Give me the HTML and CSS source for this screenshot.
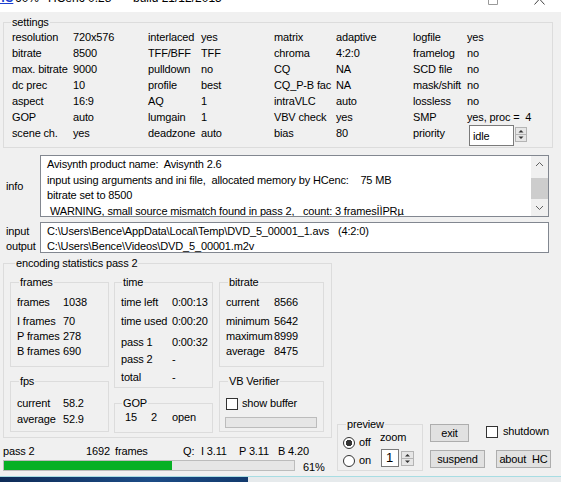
FILE: index.html
```html
<!DOCTYPE html>
<html lang="en">
<head>
  <meta charset="UTF-8">
  <title>HCenc 0.28</title>
  <link rel="stylesheet" href="styles.css">
</head>
<body>
  <div class="window">
    <div class="titlebar">
      <div class="title-text">
        <span class="app-icon">HC</span>
        <span class="t-pct">60%</span>
        <span class="t-name">HCenc 0.28</span>
        <span>build 21/12/2015</span>
      </div>
      <div class="title-controls">
        <svg width="10" height="5" viewBox="0 0 10 5"><path d="M0.5 0 V4.5 H9.5 V0" fill="none" stroke="#9a9a9a"/></svg>
        <svg width="11" height="5" viewBox="0 0 11 5"><path d="M5.5 -1 L0.5 4.5 M5.5 -1 L10.5 4.5" fill="none" stroke="#444"/></svg>
      </div>
    </div>

    <div class="content">
      <fieldset class="group settings">
        <legend>settings</legend>
        <div class="settings-grid">
          <span>resolution</span><span>720x576</span><span>interlaced</span><span>yes</span><span>matrix</span><span>adaptive</span><span>logfile</span><span>yes</span>
          <span>bitrate</span><span>8500</span><span>TFF/BFF</span><span>TFF</span><span>chroma</span><span>4:2:0</span><span>framelog</span><span>no</span>
          <span>max. bitrate</span><span>9000</span><span>pulldown</span><span>no</span><span>CQ</span><span>NA</span><span>SCD file</span><span>no</span>
          <span>dc prec</span><span>10</span><span>profile</span><span>best</span><span>CQ_P-B fac</span><span>NA</span><span>mask/shift</span><span>no</span>
          <span>aspect</span><span>16:9</span><span>AQ</span><span>1</span><span>intraVLC</span><span>auto</span><span>lossless</span><span>no</span>
          <span>GOP</span><span>auto</span><span>lumgain</span><span>1</span><span>VBV check</span><span>yes</span><span>SMP</span><span>yes, proc =  4</span>
          <span>scene ch.</span><span>yes</span><span>deadzone</span><span>auto</span><span>bias</span><span>80</span><span>priority</span>
          <span class="combo">
            <span class="combo-box">idle</span>
            <svg class="combo-spin" width="12" height="15" viewBox="0 0 12 15">
              <rect x="0.5" y="0.5" width="11" height="14" fill="#e6e6e6" stroke="#b4b4b4"/>
              <line x1="1" y1="7.5" x2="11" y2="7.5" stroke="#b4b4b4"/>
              <path d="M6 3 L8.5 5.5 H3.5 Z" fill="#333"/>
              <path d="M6 12 L8.5 9.5 H3.5 Z" fill="#333"/>
            </svg>
          </span>
        </div>
      </fieldset>

      <div class="info-row">
        <div class="side-label">info</div>
        <div class="edit info-box">
          <div class="info-text">Avisynth product name:  Avisynth 2.6
input using arguments and ini file,  allocated memory by HCenc:    75 MB
bitrate set to 8500
 WARNING, small source mismatch found in pass 2,   count: 3 framesİÌPRµ</div>
          <div class="scrollbar">
            <svg width="17" height="17" viewBox="0 0 17 17"><path d="M5 10 L8.5 6.5 L12 10" fill="none" stroke="#606060"/></svg>
            <div class="thumb"></div>
            <div class="track"></div>
            <svg width="17" height="17" viewBox="0 0 17 17"><path d="M5 7 L8.5 10.5 L12 7" fill="none" stroke="#606060"/></svg>
          </div>
        </div>
      </div>

      <div class="io-row">
        <div class="side-label io-labels">input
output</div>
        <div class="edit io-box">C:\Users\Bence\AppData\Local\Temp\DVD_5_00001_1.avs   (4:2:0)
C:\Users\Bence\Videos\DVD_5_00001.m2v</div>
      </div>

      <div class="lower">
        <div class="lower-left">
          <fieldset class="group stats">
            <legend>encoding statistics pass 2</legend>
            <div class="stat-cols">
              <div class="stat-col c1">
                <fieldset class="group box frames">
                  <legend>frames</legend>
                  <div class="kv"><span class="k">frames</span><span>1038</span></div>
                  <div class="kv mt4"><span class="k">I frames</span><span>70</span></div>
                  <div class="kv"><span class="k">P frames</span><span>278</span></div>
                  <div class="kv"><span class="k">B frames</span><span>690</span></div>
                </fieldset>
                <fieldset class="group box fps">
                  <legend>fps</legend>
                  <div class="kv"><span class="k">current</span><span>58.2</span></div>
                  <div class="kv mt1"><span class="k">average</span><span>52.9</span></div>
                </fieldset>
              </div>
              <div class="stat-col c2">
                <fieldset class="group box time">
                  <legend>time</legend>
                  <div class="kv"><span class="k">time left</span><span>0:00:13</span></div>
                  <div class="kv mt4"><span class="k">time used</span><span>0:00:20</span></div>
                  <div class="kv mt6"><span class="k">pass 1</span><span>0:00:32</span></div>
                  <div class="kv mt2"><span class="k">pass 2</span><span>-</span></div>
                  <div class="kv mt3"><span class="k">total</span><span>-</span></div>
                </fieldset>
                <fieldset class="group box gop">
                  <legend>GOP</legend>
                  <div class="gop-row"><span class="g1">15</span><span class="g2">2</span><span>open</span></div>
                </fieldset>
              </div>
              <div class="stat-col c3">
                <fieldset class="group box bitrate">
                  <legend>bitrate</legend>
                  <div class="kv"><span class="k">current</span><span>8566</span></div>
                  <div class="kv mt4"><span class="k">minimum</span><span>5642</span></div>
                  <div class="kv"><span class="k">maximum</span><span>8999</span></div>
                  <div class="kv"><span class="k">average</span><span>8475</span></div>
                </fieldset>
                <fieldset class="group box vbv">
                  <legend>VB Verifier</legend>
                  <div class="check-row"><span class="checkbox"></span><span>show buffer</span></div>
                  <div class="vb-bar"></div>
                </fieldset>
              </div>
            </div>
          </fieldset>

          <div class="pass-line">
            <span class="p-pass">pass 2</span>
            <span class="p-num">1692</span>
            <span class="p-frames">frames</span>
            <span class="p-q">Q:</span>
            <span class="p-i">I 3.11</span>
            <span class="p-p">P 3.11</span>
            <span>B 4.20</span>
          </div>
          <div class="progress-row">
            <div class="progress"><div class="fill" style="width: 58%"></div></div>
            <span class="pct">61%</span>
          </div>
        </div>

        <div class="lower-right">
          <fieldset class="group preview">
            <legend>preview</legend>
            <div class="preview-body">
              <div class="radios">
                <div class="radio-row"><span class="radio checked"></span><span>off</span></div>
                <div class="radio-row"><span class="radio"></span><span>on</span></div>
              </div>
              <div class="zoom">
                <div class="zoom-label">zoom</div>
                <div class="zoom-edit">
                  <span class="zoom-box">1</span>
                  <svg class="zoom-spin" width="13" height="15" viewBox="0 0 13 15">
                    <rect x="0.5" y="0.5" width="12" height="14" fill="#e6e6e6" stroke="#b4b4b4"/>
                    <line x1="1" y1="7.5" x2="12" y2="7.5" stroke="#b4b4b4"/>
                    <path d="M6.5 3 L9 5.5 H4 Z" fill="#333"/>
                    <path d="M6.5 12 L9 9.5 H4 Z" fill="#333"/>
                  </svg>
                </div>
              </div>
            </div>
          </fieldset>

          <div class="actions">
            <div class="action-row">
              <div class="btn btn-exit">exit</div>
              <span class="checkbox shut-box"></span>
              <span class="shut-label">shutdown</span>
            </div>
            <div class="action-row second">
              <div class="btn btn-wide">suspend</div>
              <div class="btn btn-wide about">about  HC</div>
            </div>
          </div>
        </div>
      </div>
    </div>
  </div>
  <div class="taskbar">
    <div class="desk"></div>
    <div class="tray"></div>
  </div>
</body>
</html>
```

FILE: styles.css
```css
* {
  box-sizing: border-box;
}
body {
  margin: 0;
  width: 561px;
  height: 482px;
  overflow: hidden;
  background: #f0f0f0;
  font-family: 'Liberation Sans', Arial, sans-serif;
  font-size: 11px;
  letter-spacing: -0.15px;
  color: #000;
}
.window {
  height: 476px;
  display: flex;
  flex-direction: column;
}

/* title bar (mostly scrolled off the top) */
.titlebar {
  height: 12px;
  flex: none;
  background: #fff;
  display: flex;
  overflow: hidden;
  font-size: 12px;
  letter-spacing: 0;
}
.title-text {
  display: flex;
  line-height: 12px;
  margin-top: -8px;
  white-space: nowrap;
}
.app-icon {
  width: 19px;
  margin-left: -4px;
  color: #1c3fd0;
  font-weight: bold;
  text-decoration: underline;
}
.t-pct {
  width: 33px;
}
.t-name {
  width: 85px;
}
.title-controls {
  margin-left: auto;
  display: flex;
  align-items: flex-start;
  gap: 36px;
  padding-right: 16px;
}

.content {
  flex: 1;
  overflow: hidden;
}

/* group boxes */
.group {
  border: 1px solid #dcdcdc;
  margin: 0;
  padding: 0;
  min-width: 0;
}
.group legend {
  padding: 0 1px;
  line-height: 13px;
}

.settings {
  width: 550px;
  margin: 4px 0 0 3px;
  padding: 0 0 6px 8px;
}
.settings legend {
  margin-left: -1px;
}
.settings-grid {
  display: grid;
  grid-template-columns: 61px 75px 53px 73px 62px 77px 54px 1fr;
  grid-auto-rows: 16px;
  line-height: 16px;
  white-space: pre;
}
.combo {
  display: flex;
  align-items: flex-start;
  margin-left: 2px;
}
.combo-box {
  width: 45px;
  height: 21px;
  background: #fff;
  border: 1px solid #7a7a7a;
  padding: 3px 0 0 3px;
  line-height: 15px;
}
.combo-spin {
  margin: 2px 0 0 1px;
}

/* edit boxes */
.side-label {
  width: 34px;
  flex: none;
}
.edit {
  background: #fff;
  border: 1px solid #828790;
}
.info-row {
  display: flex;
  align-items: center;
  margin-top: 7px;
  padding-left: 6px;
}
.info-box {
  width: 509px;
  height: 62px;
  display: flex;
}
.info-text {
  flex: 1;
  padding: 1px 0 0 6px;
  line-height: 15.6px;
  white-space: pre;
  overflow: hidden;
}
.scrollbar {
  width: 17px;
  display: flex;
  flex-direction: column;
  background: #f0f0f0;
}
.scrollbar .thumb {
  height: 21px;
  margin-top: 5px;
  background: #cdcdcd;
}
.scrollbar .track {
  flex: 1;
}
.io-row {
  display: flex;
  margin-top: 5px;
  padding-left: 6px;
}
.io-labels,
.io-box {
  line-height: 15px;
  white-space: pre;
}
.io-labels {
  padding-top: 2px;
}
.io-box {
  width: 509px;
  height: 31px;
  padding: 1px 0 0 6px;
}

/* lower part */
.lower {
  display: flex;
}
.lower-left {
  width: 334px;
  flex: none;
}
.stats {
  width: 329px;
  margin: 3px 0 0 3px;
  padding: 6px 7px 4px 6px;
}
.stats > legend {
  margin-left: 5px;
}
.stat-cols {
  display: flex;
  align-items: flex-start;
}
.c1 {
  margin-right: 5px;
}
.c2 {
  margin-right: 6px;
}
.box {
  padding-left: 6px;
}
.kv {
  display: flex;
  line-height: 15px;
  white-space: nowrap;
}
.kv .k {
  width: var(--kw);
}
.mt1 { margin-top: 1px; }
.mt2 { margin-top: 2px; }
.mt3 { margin-top: 3px; }
.mt4 { margin-top: 4px; }
.mt6 { margin-top: 6px; }

.frames {
  --kw: 46px;
  width: 99px;
  padding-top: 6px;
  padding-bottom: 7px;
}
.frames legend,
.fps legend,
.bitrate legend {
  margin-left: 2px;
}
.fps {
  --kw: 46px;
  width: 99px;
  margin-top: 8px;
  padding-top: 8px;
  padding-bottom: 4px;
}
.time {
  --kw: 51px;
  width: 99px;
  padding-top: 6px;
  padding-bottom: 2px;
}
.time legend,
.gop legend {
  margin-left: 1px;
}
.gop {
  width: 99px;
  margin-top: 9px;
  padding-bottom: 7px;
}
.gop-row {
  display: flex;
  line-height: 15px;
  padding-left: 4px;
}
.g1 {
  width: 26px;
}
.g2 {
  width: 21px;
}
.bitrate {
  --kw: 48px;
  width: 105px;
  padding-top: 6px;
  padding-bottom: 7px;
}
.vbv {
  width: 105px;
  margin-top: 8px;
  padding-top: 9px;
  padding-bottom: 3px;
}
.vbv legend {
  margin-left: 2px;
}
.check-row {
  display: flex;
  align-items: center;
  height: 13px;
  line-height: 13px;
}
.checkbox {
  width: 12px;
  height: 12px;
  flex: none;
  background: #fff;
  border: 1px solid #333;
}
.check-row .checkbox {
  margin-right: 4px;
}
.vb-bar {
  width: 92px;
  height: 11px;
  margin: 7px 0 0 -1px;
  background: #e6e6e6;
  border: 1px solid #bcbcbc;
}

.pass-line {
  display: flex;
  margin-top: 7px;
  padding-left: 3px;
  line-height: 13px;
  white-space: pre;
}
.p-pass { width: 83px; }
.p-num { width: 29px; }
.p-frames { width: 68px; }
.p-q { width: 18px; }
.p-i { width: 38px; }
.p-p { width: 39px; }
.progress-row {
  display: flex;
  margin-top: 2px;
  padding-left: 3px;
}
.progress {
  width: 292px;
  height: 11px;
  background: #e6e6e6;
  border: 1px solid #bcbcbc;
}
.progress .fill {
  height: 100%;
  background: #06b025;
}
.pct {
  margin: 1px 0 0 8px;
  line-height: 13px;
}

/* preview and buttons */
.lower-right {
  display: flex;
  align-items: flex-start;
}
.preview {
  width: 86px;
  margin: 164px 0 0 3px;
  padding: 0 0 3px 5px;
}
.preview legend {
  margin-left: 3px;
}
.preview-body {
  display: flex;
}
.radios {
  width: 38px;
}
.radio-row {
  display: flex;
  align-items: center;
  height: 13px;
  line-height: 13px;
  margin-top: 5px;
}
.radio {
  width: 12px;
  height: 12px;
  margin-right: 4px;
  border: 1px solid #333;
  border-radius: 50%;
  background: #fff;
}
.radio.checked {
  background: radial-gradient(circle, #333 0 3px, #fff 3.5px);
}
.zoom-label {
  line-height: 13px;
  margin-left: -1px;
}
.zoom-edit {
  display: flex;
  align-items: flex-start;
  margin-top: 5px;
}
.zoom-box {
  width: 18px;
  height: 18px;
  background: #fff;
  border: 1px solid #7a7a7a;
  padding-left: 4px;
  font-size: 13px;
  line-height: 16px;
}
.zoom-spin {
  margin: 2px 0 0 2px;
}
.actions {
  margin: 170px 0 0 7px;
}
.action-row {
  display: flex;
  align-items: flex-start;
}
.action-row.second {
  margin-top: 8px;
  gap: 11px;
}
.btn {
  height: 18px;
  background: #e1e1e1;
  border: 1px solid #adadad;
  line-height: 16px;
  text-align: center;
  white-space: pre;
}
.btn-exit {
  width: 39px;
}
.btn-wide {
  width: 55px;
}
.shut-box {
  margin: 2px 0 0 17px;
}
.shut-label {
  margin: 1px 0 0 5px;
  line-height: 13px;
}

/* bit of desktop below the window */
.taskbar {
  height: 6px;
  display: flex;
  border-top: 1px solid #a8dde3;
}
.desk {
  width: 248px;
  background: linear-gradient(90deg, #0e2b57, #1c4c86 60%, #123a6d);
}
.tray {
  flex: 1;
  background: #e6eaec;
}
```
